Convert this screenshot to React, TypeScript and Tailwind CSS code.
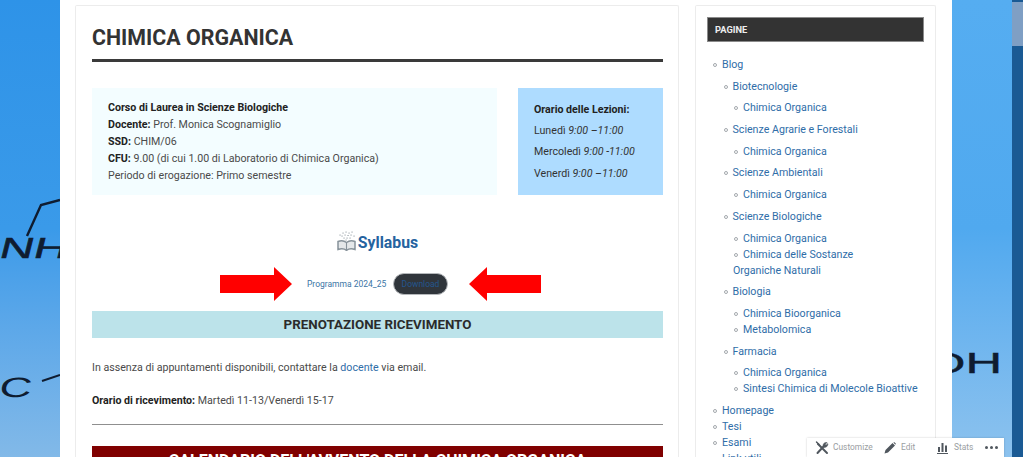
type PageItem = { label: string; children?: PageItem[] };

const pages: PageItem[] = [
  {
    label: "Blog",
    children: [
      { label: "Biotecnologie", children: [{ label: "Chimica Organica" }] },
      { label: "Scienze Agrarie e Forestali", children: [{ label: "Chimica Organica" }] },
      { label: "Scienze Ambientali", children: [{ label: "Chimica Organica" }] },
      {
        label: "Scienze Biologiche",
        children: [
          { label: "Chimica Organica" },
          { label: "Chimica delle Sostanze\nOrganiche Naturali" },
        ],
      },
      {
        label: "Biologia",
        children: [{ label: "Chimica Bioorganica" }, { label: "Metabolomica" }],
      },
      {
        label: "Farmacia",
        children: [
          { label: "Chimica Organica" },
          { label: "Sintesi Chimica di Molecole Bioattive" },
        ],
      },
    ],
  },
  { label: "Homepage" },
  { label: "Tesi" },
  { label: "Esami" },
  { label: "Link utili" },
];

function PageTree({ items, nested }: { items: PageItem[]; nested?: boolean }) {
  return (
    <ul className={nested ? "my-[5.7px] pl-[10.5px]" : "pl-[5px]"}>
      {items.map((item) => (
        <li key={item.label} className="whitespace-pre-line text-[10.65px] leading-[16px] text-[#2f6da8]">
          <span className="mr-[5px] ml-[1px] inline-block size-[4px] rounded-full border border-[#a3a8ad] align-[1px]" />
          {item.label}
          {item.children && <PageTree items={item.children} nested />}
        </li>
      ))}
    </ul>
  );
}

function RedArrow({ flip }: { flip?: boolean }) {
  return (
    <svg width="72" height="34" viewBox="0 0 72 34" className={flip ? "rotate-180" : ""}>
      <path d="M0 8H54V0L72 17L54 34V26H0Z" fill="#ff0000" />
    </svg>
  );
}

function SyllabusIcon() {
  return (
    <svg width="19" height="20" viewBox="0 0 19 20" fill="none" className="mb-[4px]">
      <path d="M1 10.5C4 9.300 7 9.500 9.500 11.500C12 9.500 15 9.300 18 10.500V18.500C15 17.500 12 17.500 9.500 19.300C7 17.500 4 17.500 1 18.500Z" fill="#e4e7e9" stroke="#87929a" strokeWidth="1.5" />
      <path d="M9.500 11.500V19" stroke="#87929a" strokeWidth="1.1" />
      <path
        d="M3 4h.1M6 2h.1M9 1h.1M12 2h.1M15 1h.1M5 5h.1M8 4h.1M11 4.500h.1M14 4h.1M17 5h.1M7 7h.1M10 7h.1M13 7h.1M9 9h.1"
        stroke="#7d8890"
        strokeLinecap="round"
        strokeWidth="1.2"
      />
    </svg>
  );
}

function ToolsIcon() {
  return (
    <svg width="14" height="14" viewBox="0 0 14 14" fill="none" stroke="#50575e" strokeLinecap="round">
      <path d="M3 3L12 12" strokeWidth="2" />
      <path d="M1.500 1L4 3.500" strokeWidth="1.400" />
      <path d="M2.500 12L8.500 5.500" strokeWidth="2" />
      <path d="M8 5.500C7.500 3 9.500 1 12 1.500L10.300 3.300L11 4.300L12.800 2.600C13.200 5 11 7 8.800 6.200" fill="#50575e" strokeWidth="0.6" />
    </svg>
  );
}

function PencilIcon() {
  return (
    <svg width="12" height="12" viewBox="0 0 12 12">
      <path d="M0.500 11.500L1.500 8L8.500 1L11 3.500L4 10.500Z M9.300 0.500L11.500 2.700L11.800 1.500L10.500 0.200Z" fill="#50575e" />
    </svg>
  );
}

function StatsIcon() {
  return (
    <svg width="11" height="12" viewBox="0 0 11 12" fill="#50575e">
      <path d="M1 5h2v5H1zM4.500 1h2v9h-2zM8 3.500h2V10H8zM0 11h11v1H0z" />
    </svg>
  );
}

export default function App() {
  return (
    <div
      className="relative flex h-[457px] w-[1023px] overflow-hidden text-[10.65px] text-[#4a4a4a]"
      style={{ fontFamily: "Roboto, sans-serif" }}
    >
      {/* left part of the page background, molecule printed on it */}
      <div className="h-full w-[60px] shrink-0 bg-gradient-to-b from-[#2e93e8] via-[#3a9ae9] to-[#82b9e8]">
        <svg width="60" height="457" fill="none" stroke="#0f1c30" strokeWidth="2.4">
          <path d="M27 236L41 205L60 200" />
          <text transform="translate(-2 258) skewX(-14) scale(1.62 1)" fontSize="29" fill="#0f1c30" stroke="#0f1c30" strokeWidth="0.5" fontFamily="Liberation Sans, sans-serif">
            NH
          </text>
          <text transform="translate(-2 397) skewX(-10) scale(1.6 1)" fontSize="28" fill="#0f1c30" stroke="none" fontFamily="Liberation Sans, sans-serif">
            C
          </text>
          <path d="M42 381L60 375" strokeWidth="2" />
        </svg>
      </div>

      <main className="flex h-full w-[892px] shrink-0 gap-[16px] bg-white px-[15px] pt-[5px]">
        <article className="h-[452px] w-[604px] shrink-0 overflow-hidden rounded-t-[2px] border border-b-0 border-[#ececec] pl-[16px] pr-[15px] pt-[16.5px]">
          <h1 className="border-b-[3px] border-[#3a3a3a] pb-[7px] text-[21.4px] font-bold leading-[29px] text-[#333]">
            CHIMICA ORGANICA
          </h1>
          <div className="mt-[26.5px] flex justify-between">
            <div className="h-[107px] w-[405px] bg-[#f3fdff] pt-[10.5px] pl-[16px] leading-[17.1px]">
              <p className="font-bold text-[#222]">Corso di Laurea in Scienze Biologiche</p>
              <p><b className="text-[#222]">Docente:</b> Prof. Monica Scognamiglio</p>
              <p><b className="text-[#222]">SSD:</b> CHIM/06</p>
              <p><b className="text-[#222]">CFU:</b> 9.00 (di cui 1.00 di Laboratorio di Chimica Organica)</p>
              <p>Periodo di erogazione: Primo semestre</p>
            </div>
            <div className="h-[107px] w-[145px] bg-[#aedcff] pt-[11px] pl-[16px] leading-[21.2px] text-[#333]">
              <p className="font-bold text-[#222]">Orario delle Lezioni:</p>
              <p>Lunedì <i>9:00 –11:00</i></p>
              <p>Mercoledì <i>9:00 -11:00</i></p>
              <p>Venerdì <i>9:00 –11:00</i></p>
            </div>
          </div>
          <div className="mt-[36px] flex items-center justify-center gap-[2px]">
            <SyllabusIcon />
            <span className="text-[15.8px] font-bold leading-[24px] text-[#25639f]">Syllabus</span>
          </div>
          <div className="mt-[12px] flex h-[34px] items-center">
            <div className="ml-[128px]"><RedArrow /></div>
            <span className="ml-[15px] w-[79px] whitespace-nowrap text-[8.5px] text-[#3b75a5]">Programma 2024_25</span>
            <span className="ml-[7px] flex h-[22px] w-[55px] items-center justify-center rounded-full border border-[#b5b8bb] bg-[#30353b] text-[8.5px] text-[#24558f]">
              Download
            </span>
            <div className="ml-[21px]"><RedArrow flip /></div>
          </div>
          <h2 className="mt-[10px] h-[27px] bg-[#bce3ea] text-center text-[13.35px] font-bold leading-[27px] text-[#2b2b2b]">
            PRENOTAZIONE RICEVIMENTO
          </h2>
          <p className="mt-[22px] leading-[16px]">
            In assenza di appuntamenti disponibili, contattare la <span className="text-[#2f6da8]">docente</span> via email.
          </p>
          <p className="mt-[17px] leading-[16px]">
            <b className="text-[#222]">Orario di ricevimento:</b> Martedì 11-13/Venerdì 15-17
          </p>
          <hr className="mt-[15px] border-t border-[#8f8f8f]" />
          <h2 className="mt-[21px] h-[30px] bg-[#800000] text-center text-[16px] font-bold leading-[30px] text-white">
            CALENDARIO DELL'AVVENTO DELLA CHIMICA ORGANICA
          </h2>
        </article>

        <aside className="h-[452px] w-[241px] shrink-0 overflow-hidden rounded-t-[2px] border border-b-0 border-[#ececec] px-[11px] pt-[11px]">
          <div className="h-[25px] border border-[#8b8b8b] bg-[#333] pl-[7px] text-[9.3px] font-bold leading-[23px] text-[#eee]">
            PAGINE
          </div>
          <div className="mt-[15px]">
            <PageTree items={pages} />
          </div>
        </aside>
      </main>

      {/* right part of the background */}
      <div className="h-full w-[60px] shrink-0 overflow-hidden bg-gradient-to-b from-[#55adf1] via-[#50a9ef] to-[#8cc2ee]">
        <svg width="60" height="457">
          <text transform="translate(-26 373) scale(1.75 1)" fontSize="29" fill="#0f1c30" stroke="#0f1c30" strokeWidth="0.4" fontFamily="Liberation Sans, sans-serif">
            OH
          </text>
        </svg>
      </div>
      <div className="flex h-full w-[11px] shrink-0 flex-col bg-[#1a5a94]">
        <div className="mt-[2px] h-[44px] bg-[#7f9fc4]" />
      </div>

      {/* floating admin toolbar */}
      <div className="absolute bottom-0 left-[807px] flex h-[19px] w-[197px] items-center bg-white pl-[8px] text-[8.4px] text-[#9a9ea2] shadow-[0_0_2px_rgba(0,0,0,0.2)]">
        <ToolsIcon />
        <span className="ml-[4px] w-[40px]">Customize</span>
        <span className="ml-[11px]"><PencilIcon /></span>
        <span className="ml-[5px] w-[16px]">Edit</span>
        <span className="ml-[20px]"><StatsIcon /></span>
        <span className="ml-[6px] w-[18px]">Stats</span>
        <span className="ml-[13px] flex gap-[2px]">
          <span className="size-[3px] rounded-full bg-[#50575e]" />
          <span className="size-[3px] rounded-full bg-[#50575e]" />
          <span className="size-[3px] rounded-full bg-[#50575e]" />
        </span>
      </div>
    </div>
  );
}
